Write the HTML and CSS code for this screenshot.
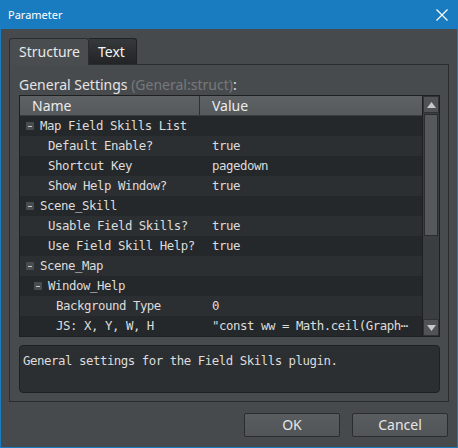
FILE: index.html
```html
<!DOCTYPE html>
<html>
<head>
<meta charset="utf-8">
<link rel="stylesheet" href="styles.css">
</head>
<body>
<div class="window">
  <div class="titlebar">
    <span class="title">Parameter</span>
    <svg class="close" width="12" height="12" viewBox="0 0 12 12"><path d="M0.5 0.5 L11.5 11.5 M11.5 0.5 L0.5 11.5" stroke="#fff" stroke-width="1.2" fill="none"/></svg>
  </div>
  <div class="content">
    <div class="tabs">
      <div class="tab active">Structure</div>
      <div class="tab">Text</div>
    </div>
    <div class="pane">
      <div class="label">General Settings <span class="dim">(General:struct)</span>:</div>
      <div class="table">
        <div class="list">
          <div class="head"><div class="hcell name">Name</div><div class="hcell">Value</div></div>
          <div class="row odd"><div class="cell l1"><span class="minus"></span>Map Field Skills List</div><div class="cell val"></div></div>
          <div class="row"><div class="cell l1c">Default Enable?</div><div class="cell val">true</div></div>
          <div class="row odd"><div class="cell l1c">Shortcut Key</div><div class="cell val">pagedown</div></div>
          <div class="row"><div class="cell l1c">Show Help Window?</div><div class="cell val">true</div></div>
          <div class="row odd"><div class="cell l1"><span class="minus"></span>Scene_Skill</div><div class="cell val"></div></div>
          <div class="row"><div class="cell l1c">Usable Field Skills?</div><div class="cell val">true</div></div>
          <div class="row odd"><div class="cell l1c">Use Field Skill Help?</div><div class="cell val">true</div></div>
          <div class="row"><div class="cell l1"><span class="minus"></span>Scene_Map</div><div class="cell val"></div></div>
          <div class="row odd"><div class="cell l2"><span class="minus"></span>Window_Help</div><div class="cell val"></div></div>
          <div class="row"><div class="cell l2c">Background Type</div><div class="cell val">0</div></div>
          <div class="row odd"><div class="cell l2c">JS: X, Y, W, H</div><div class="cell val">"const ww = Math.ceil(Graph⋯</div></div>
        </div>
        <div class="scroll">
          <div class="sbtn"><svg width="9" height="6" viewBox="0 0 9 6"><path d="M4.5 0 L9 6 L0 6 Z" fill="#c8c8c8"/></svg></div>
          <div class="track"><div class="thumb"></div></div>
          <div class="sbtn"><svg width="9" height="6" viewBox="0 0 9 6"><path d="M0 0 L9 0 L4.5 6 Z" fill="#c8c8c8"/></svg></div>
        </div>
      </div>
      <div class="desc">General settings for the Field Skills plugin.</div>
    </div>
    <div class="buttons">
      <div class="btn">OK</div>
      <div class="btn">Cancel</div>
    </div>
  </div>
</div>
</body>
</html>
```

FILE: styles.css
```css
* { box-sizing: border-box; }
html, body { margin: 0; padding: 0; background: #474a4d; }
.window {
  width: 458px; height: 448px;
  border: 1px solid #1a7cc0; border-top: none;
  background: #474a4d;
  display: flex; flex-direction: column;
  font-family: "Noto Sans", "Open Sans", sans-serif;
}
.titlebar {
  height: 29px; background: #1a7cc0;
  display: flex; align-items: center; justify-content: space-between;
  padding: 0 10px 0 8px;
  margin: 0 -1px;
}
.title { color: #fff; font-size: 11px; font-family: "Noto Sans", sans-serif; }
.close { display: block; }
.content { flex: 1; padding: 9px 8px 0 8px; display: flex; flex-direction: column; }
.tabs { display: flex; height: 26px; }
.tab {
  height: 26px; line-height: 25px; font-size: 14px; color: #f0f0f0;
  padding: 0 9px;
  border: 1px solid #1f2123; border-bottom: none;
  border-radius: 3px 3px 0 0;
}
.tab.active { width: 80px; background: #4a4d50; color: #e8e8e8; padding-left: 9px; position: relative; z-index: 1; height: 27px; border-color: #2a2c2e; }
.tab:not(.active) { width: 48px; background: linear-gradient(#36393b, #222426); border-left: none; border-radius: 0 3px 0 0; color: #f4f4f4; padding-left: 9px; }
.pane {
  height: 338px; border: 1px solid #2a2c2e; background: #484b4e;
  padding: 10px 8px 8px 9px;
  display: flex; flex-direction: column;
}
.label { height: 20px; line-height: 20px; font-size: 14px; color: #e4e4e4; }
.dim { color: #76797c; }
.table {
  height: 242px; border: 1px solid #1d1f21; background: #26292b;
  display: grid; grid-template-columns: 1fr 17px;
}
.head {
  height: 20px; display: grid; grid-template-columns: 180px 1fr;
  background: linear-gradient(#5f6265, #56595c);
  border-bottom: 1px solid #3a3d40;
}
.hcell { font-size: 14px; color: #ececec; line-height: 19px; padding-left: 12px; }
.hcell.name { border-right: 1px solid #2e3033; }
.row { height: 20px; display: grid; grid-template-columns: 180px 1fr; background: #2c2f32; }
.row.odd { background: #25282a; }
.cell {
  font-family: "DejaVu Sans Mono", monospace; font-size: 12.4px; letter-spacing: -0.47px;
  color: #dcdcdc; line-height: 20px; white-space: nowrap; overflow: hidden;
  display: flex; align-items: center;
}
.cell.val { padding-left: 12px; }
.l1 { padding-left: 6px; }
.l1c { padding-left: 28px; }
.l2 { padding-left: 14px; }
.l2c { padding-left: 36px; }
.minus {
  width: 8px; height: 8px; background: #4a4d50; border-radius: 1px; margin-right: 6px;
  position: relative; flex: none;
}
.minus::after { content: ""; position: absolute; left: 2px; top: 3.5px; width: 4px; height: 1px; background: #c8c8c8; }
.scroll {
  border-left: 1px solid #1d1f21; background: #3b3e41;
  display: flex; flex-direction: column;
}
.sbtn {
  height: 17px; background: #505356; display: flex; align-items: center; justify-content: center;
  border: 1px solid #303234;
}
.track { flex: 1; padding: 1px 1px; }
.thumb { height: 122px; background: #56595c; border: 1px solid #2a2c2e; }
.desc {
  margin-top: 8px; height: 48px; border: 1px solid #1e2022; border-radius: 4px;
  background: #2c2f32; color: #dcdcdc;
  font-family: "DejaVu Sans Mono", monospace; font-size: 12.4px; letter-spacing: -0.47px;
  padding: 5px 3px; line-height: 20px;
}
.buttons { display: flex; justify-content: flex-end; gap: 12px; margin-top: 11px; padding-right: 1px; }
.btn {
  width: 96px; height: 24px; background: linear-gradient(#5a5d60, #525558);
  border: 1px solid #2a2c2e; border-radius: 2px;
  color: #e6e6e6; font-size: 14px; text-align: center; line-height: 22px;
}
```
